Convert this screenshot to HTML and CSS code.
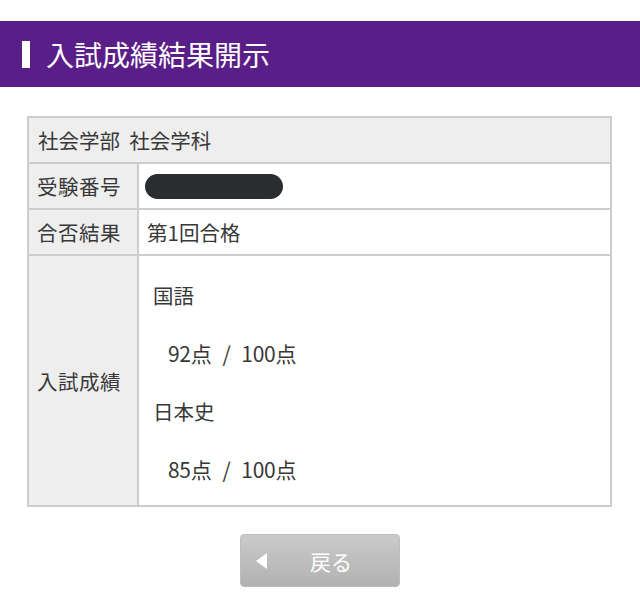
FILE: index.html
```html
<!DOCTYPE html>
<html lang="ja">
<head>
<meta charset="utf-8">
<link rel="stylesheet" href="styles.css">
</head>
<body>
<header class="page-head">
  <span class="head-mark"></span>
  <h1 class="head-title">入試成績結果開示</h1>
</header>
<main class="content">
  <table class="result">
    <tr>
      <td class="dept" colspan="2">社会学部&nbsp;&nbsp;社会学科</td>
    </tr>
    <tr>
      <th class="label">受験番号</th>
      <td class="value"><span class="redact"></span></td>
    </tr>
    <tr>
      <th class="label">合否結果</th>
      <td class="value">第1回合格</td>
    </tr>
    <tr>
      <th class="label">入試成績</th>
      <td class="value scores">
        <div class="line subject">国語</div>
        <div class="line score">92点<span class="sep">/</span>100点</div>
        <div class="line subject">日本史</div>
        <div class="line score">85点<span class="sep">/</span>100点</div>
      </td>
    </tr>
  </table>
  <div class="actions">
    <button class="back-btn" type="button"><span class="tri"></span><span class="back-text">戻る</span></button>
  </div>
</main>
</body>
</html>
```
FILE: styles.css
```css
html, body {
  margin: 0;
  padding: 0;
  background: #ffffff;
}
body {
  font-family: "Noto Sans CJK JP", "Noto Sans", sans-serif;
  color: #383838;
}
.page-head {
  margin-top: 21px;
  height: 66px;
  background: #5a1e89;
  display: flex;
  align-items: center;
  padding-left: 22px;
  gap: 16px;
}
.head-mark {
  width: 8px;
  height: 27px;
  background: #ffffff;
}
.head-title {
  margin: 0;
  font-size: 28px;
  font-weight: 400;
  color: #ffffff;
  line-height: 1;
}
.content {
  padding: 29px 28px 0 27px;
}
.result {
  width: 100%;
  border-collapse: collapse;
  border: 2px solid #cdcdcd;
  font-size: 20.5px;
}
.result td, .result th {
  border: 2px solid #cdcdcd;
  font-weight: 400;
  text-align: left;
  vertical-align: middle;
  line-height: 22px;
}
.dept {
  background: #eeeeee;
  height: 46px;
  padding: 0 9px;
  box-sizing: border-box;
}
.label {
  width: 110px;
  background: #eeeeee;
  padding: 0 8px;
  height: 46px;
  box-sizing: border-box;
  white-space: nowrap;
  letter-spacing: 0.5px;
}
.value {
  background: #ffffff;
  padding: 0 8px;
}
.redact {
  display: block;
  width: 138px;
  height: 25px;
  border-radius: 13px;
  background: #2a2d30;
  margin-left: -2px;
}
.scores {
  padding: 10px 8px 7px 14px;
}
.line {
  height: 58px;
  display: flex;
  align-items: center;
}
.score {
  padding-left: 15px;
  font-size: 21px;
  letter-spacing: -0.3px;
}
.sep {
  margin: 0 11px;
}
.actions {
  display: flex;
  justify-content: center;
  padding-top: 27px;
  padding-left: 1px;
}
.back-btn {
  width: 160px;
  height: 53px;
  border: 1px solid #bdbdbd;
  border-radius: 4px;
  background: linear-gradient(#cacaca, #b2b2b2);
  display: flex;
  align-items: center;
  padding: 0 0 0 15px;
  font-family: "Noto Sans CJK JP", "Noto Sans", sans-serif;
  cursor: pointer;
}
.tri {
  width: 0;
  height: 0;
  border-top: 8px solid transparent;
  border-bottom: 8px solid transparent;
  border-right: 11px solid #ffffff;
}
.back-text {
  margin-left: 43px;
  font-size: 21px;
  color: #ffffff;
}
```
